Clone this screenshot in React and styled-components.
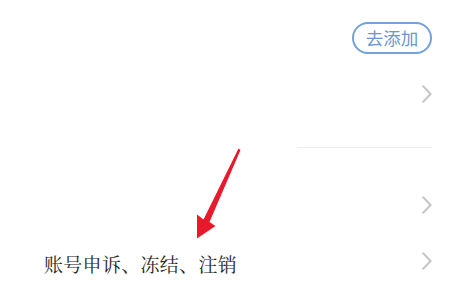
import React from 'react';
import styled, { createGlobalStyle } from 'styled-components';

const GlobalStyle = createGlobalStyle`
  html, body {
    margin: 0;
    padding: 0;
    background: #ffffff;
  }
  body {
    font-family: "Noto Sans CJK SC", "Noto Sans", sans-serif;
  }
`;

const Page = styled.div`
  width: 453px;
  height: 299px;
  overflow: hidden;
  position: relative;
  background: #fff;
  padding: 0 21px 0 44px;
  box-sizing: border-box;
`;

const Row = styled.div`
  display: flex;
  align-items: center;
  justify-content: space-between;
  height: ${({ $h }) => $h}px;
  margin-top: ${({ $mt }) => $mt || 0}px;
`;

const Label = styled.span`
  font-family: "Noto Serif CJK SC", "Noto Sans CJK SC", serif;
  font-size: 19px;
  color: #262626;
  padding-top: 4px;
  letter-spacing: 0.3px;
`;

const AddButton = styled.button`
  margin-left: auto;
  width: 80px;
  height: 32px;
  border: 2px solid #73a1dc;
  border-radius: 16px;
  background: #fff;
  color: #6a96d2;
  font-family: "Noto Sans CJK SC", sans-serif;
  font-size: 17.5px;
  line-height: 1;
  padding: 0;
  display: flex;
  align-items: center;
  justify-content: center;
`;

const Spacer = styled.div`
  height: ${({ $h }) => $h}px;
`;

const Divider = styled.div`
  height: 1px;
  background: #ececec;
  margin-left: 253px;
`;

const ChevronWrap = styled.span`
  margin-left: auto;
  display: flex;
  align-items: center;
`;

const Chevron = () => (
  <ChevronWrap>
    <svg width="10" height="18" viewBox="0 0 10 18">
      <polyline
        points="1.2,1.2 8.6,9 1.2,16.8"
        fill="none"
        stroke="#c6c6c6"
        strokeWidth="2"
        strokeLinecap="round"
        strokeLinejoin="round"
      />
    </svg>
  </ChevronWrap>
);

const ArrowLayer = styled.svg`
  position: absolute;
  left: 0;
  top: 0;
  pointer-events: none;
`;

export default function App() {
  return (
    <>
      <GlobalStyle />
      <Page>
        <Row $h={75}>
          <AddButton>去添加</AddButton>
        </Row>
        <Row $h={37}>
          <Chevron />
        </Row>
        <Spacer $h={35} />
        <Divider />
        <Row $h={56} $mt={29}>
          <Chevron />
        </Row>
        <Row $h={56}>
          <Label>账号申诉、冻结、注销</Label>
          <Chevron />
        </Row>
        <ArrowLayer width="453" height="299" viewBox="0 0 453 299">
          <polygon
            points="238.5,148.5 240.5,150 209.5,222 215.5,226 197,238.5 197,214.5 203.5,219.5"
            fill="#e8192c"
          />
        </ArrowLayer>
      </Page>
    </>
  );
}
